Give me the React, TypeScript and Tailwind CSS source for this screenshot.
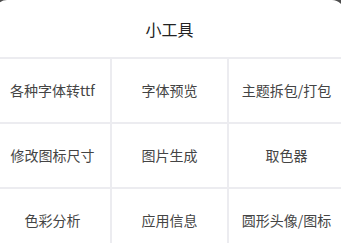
import React from "react";

const items = [
  "各种字体转ttf",
  "字体预览",
  "主题拆包/打包",
  "修改图标尺寸",
  "图片生成",
  "取色器",
  "色彩分析",
  "应用信息",
  "圆形头像/图标",
];

export default function App() {
  return (
    <div
      className="w-[341px] h-[243px] overflow-hidden bg-[#4d4d4d]"
      style={{ fontFamily: '"Noto Sans CJK SC", "Noto Sans", sans-serif' }}
    >
      <div className="ml-[-5px] w-[349px] h-[260px] rounded-t-[12px] bg-white">
        <div className="h-[57px] flex items-center justify-center text-[16px] text-[#222222]">
          小工具
        </div>
        <div className="grid grid-cols-3 gap-[2px] pt-[2px] bg-[#ececf0]">
          {items.map((t) => (
            <div
              key={t}
              className="h-[63px] bg-white flex items-center justify-center text-[14px] text-[#444444]"
            >
              {t}
            </div>
          ))}
        </div>
      </div>
    </div>
  );
}
